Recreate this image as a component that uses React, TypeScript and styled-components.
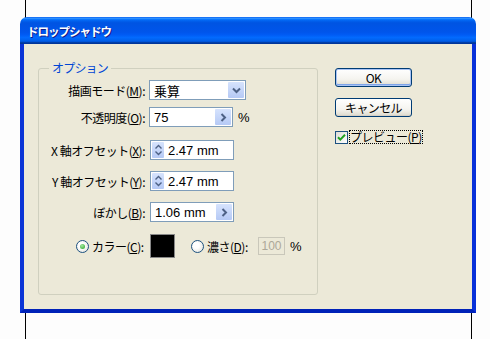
import React from 'react';
import styled, { createGlobalStyle } from 'styled-components';

const GlobalStyle = createGlobalStyle`
  html, body {
    margin: 0;
    padding: 0;
    background: #fdfdfd;
  }
  * {
    box-sizing: border-box;
  }
`;

const FONT = `"Noto Sans CJK JP", "Liberation Sans", sans-serif`;

const Page = styled.div`
  width: 490px;
  height: 339px;
  padding: 17px 0 0 20px;
  font-family: ${FONT};
  background:
    linear-gradient(#000, #000) 25px 0 / 1px 100% no-repeat,
    linear-gradient(#000, #000) 471px 0 / 1px 100% no-repeat,
    #fdfdfd;
`;

const Window = styled.div`
  width: 456px;
  display: flex;
  flex-direction: column;
`;

const TitleBar = styled.div`
  height: 27px;
  border-radius: 7px 7px 0 0;
  padding: 1px 0 0 7px;
  display: flex;
  align-items: center;
  color: #fff;
  font-size: 11.5px;
  font-weight: bold;
  letter-spacing: -1px;
  text-shadow: 1px 1px #0f1b8a;
  background: linear-gradient(
    #0058ee 0%,
    #3593ff 4%,
    #288eff 6%,
    #127dff 8%,
    #036ffc 10%,
    #0262ee 14%,
    #0057e5 20%,
    #0054e3 24%,
    #0055eb 56%,
    #005bf5 66%,
    #026afe 76%,
    #0062ef 86%,
    #0052d6 92%,
    #0040ab 94%,
    #003092 100%
  );
`;

const Frame = styled.div`
  height: 269px;
  display: flex;
  align-items: flex-start;
  padding: 17px 0 0 14px;
  background: #ece9d8;
  border: 4px solid #0831d9;
  border-top: none;
  border-left-color: #0a34d6;
  border-bottom-color: #0022b8;
`;

const GroupBox = styled.fieldset`
  margin: 0;
  padding: 2px 0 0 0;
  width: 280px;
  height: 234px;
  min-width: 0;
  border: 1px solid #d0d0bf;
  border-radius: 3px;
`;

const Legend = styled.legend`
  margin-left: 10px;
  padding: 0 3px;
  font-size: 12px;
  line-height: 14px;
  letter-spacing: -0.8px;
  color: #0046d5;
`;

const Row = styled.div<{ $gap: number; $h?: number }>`
  display: flex;
  align-items: center;
  height: ${(p) => p.$h ?? 20}px;
  margin-top: ${(p) => p.$gap}px;
  font-size: 12px;
  letter-spacing: -0.5px;
  color: #000;
`;

const Label = styled.span`
  width: 107px;
  padding-right: 1px;
  text-align: right;
  white-space: nowrap;
`;

const Key = styled.span`
  text-decoration: underline;
  text-underline-offset: 1px;
`;

const Field = styled.div<{ $w: number; $ml?: number }>`
  width: ${(p) => p.$w}px;
  height: 20px;
  margin-left: ${(p) => p.$ml ?? 3}px;
  display: flex;
  align-items: center;
  background: #fff;
  border: 1px solid #7f9db9;
  letter-spacing: 0;
`;

const FieldText = styled.span`
  flex: 1;
  padding-left: 4px;
  font-family: "Liberation Sans", "Noto Sans CJK JP", sans-serif;
  font-size: 13px;
`;

const FieldKanji = styled.span`
  flex: 1;
  padding-left: 4px;
  font-size: 13px;
`;

const SideButton = styled.div`
  width: 16px;
  height: 16px;
  margin-right: 1px;
  display: flex;
  align-items: center;
  justify-content: center;
  border-radius: 1px;
  background: linear-gradient(#d6e3fd, #b5c9f5);
`;

const Stepper = styled.div`
  width: 12px;
  height: 16px;
  margin-left: 1px;
  display: flex;
  align-items: center;
  justify-content: center;
  border-radius: 1px;
  background: linear-gradient(#d6e3fd, #b5c9f5);
`;

const Unit = styled.span`
  margin-left: 5px;
  font-family: "Liberation Sans", sans-serif;
  font-size: 13px;
`;

const Radio = styled.span<{ $on?: boolean; $ml?: number }>`
  width: 13px;
  height: 13px;
  margin-left: ${(p) => p.$ml ?? 0}px;
  border-radius: 50%;
  border: 1px solid #1c5180;
  background: radial-gradient(circle at 40% 40%, #fff 30%, #dcdcd4 100%);
  display: flex;
  align-items: center;
  justify-content: center;
  &::after {
    content: '';
    display: ${(p) => (p.$on ? 'block' : 'none')};
    width: 5px;
    height: 5px;
    border-radius: 50%;
    background: radial-gradient(circle at 40% 35%, #a6e9a2, #21a121);
  }
`;

const RadioLabel = styled.span<{ $w: number }>`
  width: ${(p) => p.$w}px;
  margin-left: 3px;
  white-space: nowrap;
`;

const Swatch = styled.div`
  width: 25px;
  height: 24px;
  background: #000;
  border: 1px solid #888;
`;

const DisabledField = styled.div`
  width: 27px;
  height: 18px;
  display: flex;
  align-items: center;
  justify-content: center;
  border: 1px solid #c9c7ba;
  color: #aca899;
  font-family: "Liberation Sans", sans-serif;
  font-size: 12px;
  letter-spacing: 0;
`;

const Side = styled.div`
  margin: 7px 0 0 17px;
  display: flex;
  flex-direction: column;
`;

const Button = styled.button<{ $default?: boolean; $gap?: number }>`
  width: 77px;
  height: 19px;
  margin-top: ${(p) => p.$gap ?? 0}px;
  padding: 0;
  font-family: ${FONT};
  font-size: 12px;
  letter-spacing: -0.6px;
  color: #000;
  border: 1px solid #003c74;
  border-radius: 3px;
  background: linear-gradient(#fff 0%, #f5f4ef 60%, #dcd9cd 100%);
  box-shadow: ${(p) =>
    p.$default ? 'inset 0 0 0 1px #a9c3f4, inset 0 -1px 0 1px #7ea4e9' : 'inset 0 -1px 0 #d6d0c5'};
`;

const CheckRow = styled.div`
  margin-top: 13px;
  display: flex;
  align-items: center;
  font-size: 12px;
  letter-spacing: -0.5px;
`;

const CheckBox = styled.span`
  width: 13px;
  height: 13px;
  border: 1px solid #1c5180;
  background: linear-gradient(135deg, #dcdcd7, #fff);
  display: flex;
  align-items: center;
  justify-content: center;
`;

const Focus = styled.span`
  margin-left: 1px;
  padding: 0 1px;
  outline: 1px dotted #000;
  outline-offset: -1px;
  line-height: 14px;
`;

const ChevronDown = () => (
  <svg width="9" height="7" viewBox="0 0 9 7">
    <path d="M1 1.5 L4.5 5 L8 1.5" fill="none" stroke="#4d6185" strokeWidth="2" />
  </svg>
);

const ChevronRight = () => (
  <svg width="7" height="9" viewBox="0 0 7 9">
    <path d="M1.5 1 L5 4.5 L1.5 8" fill="none" stroke="#4d6185" strokeWidth="2" />
  </svg>
);

const UpDown = () => (
  <svg width="7" height="12" viewBox="0 0 7 12">
    <path d="M0.5 4.5 L3.5 1.5 L6.5 4.5" fill="none" stroke="#4d6185" strokeWidth="1.4" />
    <path d="M0.5 7.5 L3.5 10.5 L6.5 7.5" fill="none" stroke="#4d6185" strokeWidth="1.4" />
  </svg>
);

const Check = () => (
  <svg width="9" height="9" viewBox="0 0 9 9">
    <path d="M1 4.2 L3.3 6.6 L8 1.8" fill="none" stroke="#21a121" strokeWidth="2" />
  </svg>
);

export default function App() {
  return (
    <>
      <GlobalStyle />
      <Page>
        <Window>
          <TitleBar>ドロップシャドウ</TitleBar>
          <Frame>
            <GroupBox>
              <Legend>オプション</Legend>
              <Row $gap={3}>
                <Label>
                  描画モード(<Key>M</Key>):
                </Label>
                <Field $w={97}>
                  <FieldKanji>乗算</FieldKanji>
                  <SideButton>
                    <ChevronDown />
                  </SideButton>
                </Field>
              </Row>
              <Row $gap={7}>
                <Label>
                  不透明度(<Key>O</Key>):
                </Label>
                <Field $w={84}>
                  <FieldText>75</FieldText>
                  <SideButton>
                    <ChevronRight />
                  </SideButton>
                </Field>
                <Unit>%</Unit>
              </Row>
              <Row $gap={13}>
                <Label>
                  X 軸オフセット(<Key>X</Key>):
                </Label>
                <Field $w={84} $ml={4}>
                  <Stepper>
                    <UpDown />
                  </Stepper>
                  <FieldText>2.47 mm</FieldText>
                </Field>
              </Row>
              <Row $gap={11}>
                <Label>
                  Y 軸オフセット(<Key>Y</Key>):
                </Label>
                <Field $w={84} $ml={4}>
                  <Stepper>
                    <UpDown />
                  </Stepper>
                  <FieldText>2.47 mm</FieldText>
                </Field>
              </Row>
              <Row $gap={11}>
                <Label>
                  ぼかし(<Key>B</Key>):
                </Label>
                <Field $w={84} $ml={4}>
                  <FieldText>1.06 mm</FieldText>
                  <SideButton>
                    <ChevronRight />
                  </SideButton>
                </Field>
              </Row>
              <Row $gap={12} $h={24}>
                <Radio $on $ml={37} />
                <RadioLabel $w={58}>
                  カラー(<Key>C</Key>):
                </RadioLabel>
                <Swatch />
                <Radio $ml={16} />
                <RadioLabel $w={51}>
                  濃さ(<Key>D</Key>):
                </RadioLabel>
                <DisabledField>100</DisabledField>
                <Unit>%</Unit>
              </Row>
            </GroupBox>
            <Side>
              <Button $default>OK</Button>
              <Button $gap={11}>キャンセル</Button>
              <CheckRow>
                <CheckBox>
                  <Check />
                </CheckBox>
                <Focus>
                  プレビュー(<Key>P</Key>)
                </Focus>
              </CheckRow>
            </Side>
          </Frame>
        </Window>
      </Page>
    </>
  );
}
